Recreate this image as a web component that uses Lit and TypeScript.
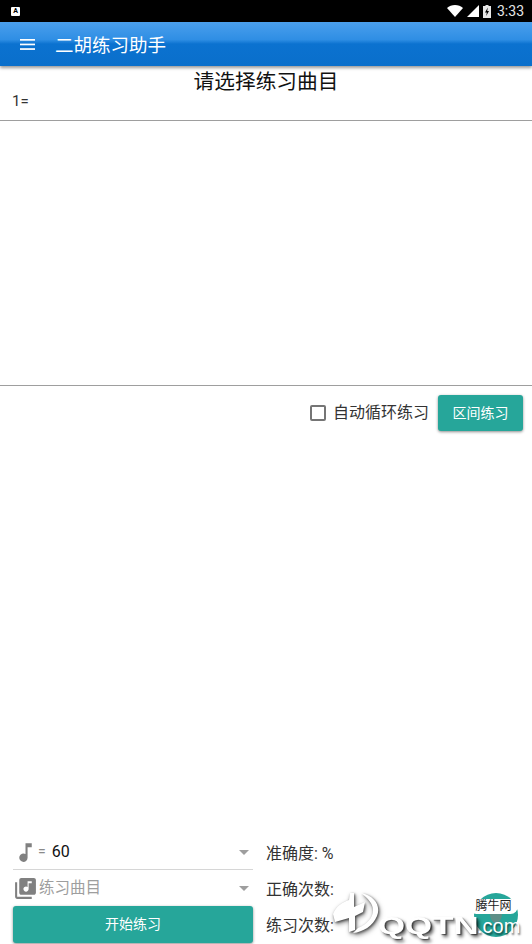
import { LitElement, html, css } from 'lit'
import { customElement } from 'lit/decorators.js'

/**
 * Erhu practice screen
 */
@customElement('app-root')
export class AppRoot extends LitElement {
  static styles = css`
    :host {
      display: flex;
      flex-direction: column;
      position: relative;
      width: 532px;
      height: 944px;
      overflow: hidden;
      background: #fff;
      color: #212121;
      font-family: 'Roboto', 'Noto Sans CJK SC', sans-serif;
    }

    .status {
      height: 22px;
      background: #000;
      display: flex;
      align-items: center;
      padding: 0 0 0 11px;
      color: #e6e6e6;
      font-size: 14px;
      flex: none;
    }
    .status .note {
      width: 9px;
      height: 9px;
      background: #fff;
      border-radius: 1px;
      color: #000;
      font-size: 7px;
      font-weight: 700;
      line-height: 9px;
      text-align: center;
    }
    .status .right {
      margin-left: auto;
      display: flex;
      align-items: center;
      gap: 4px;
      padding-right: 8px;
    }
    .status .time {
      margin-left: 2px;
    }

    .bar {
      height: 44px;
      flex: none;
      display: flex;
      align-items: center;
      gap: 20px;
      padding-left: 20px;
      color: #fff;
      font-size: 18.5px;
      background: linear-gradient(#4a9fec 0%, #2f8ee4 40%, #0b72d0 50%, #0a6fcb 100%);
      box-shadow: 0 2px 3px rgba(0, 0, 0, 0.4);
      position: relative;
    }
    .burger {
      display: block;
    }

    .score {
      height: 54px;
      flex: none;
      border-bottom: 1px solid #9e9e9e;
    }
    .title {
      text-align: center;
      font-size: 20.7px;
      line-height: 32px;
      color: #111;
    }
    .key {
      font-size: 15px;
      line-height: 16px;
      padding-left: 12px;
      margin-top: -5px;
      color: #333;
    }

    .stage {
      height: 264px;
      flex: none;
      border-bottom: 1px solid #9e9e9e;
    }

    .loop {
      flex: none;
      display: flex;
      justify-content: flex-end;
      align-items: center;
      padding: 9px 9px 0 0;
    }
    .check {
      width: 12px;
      height: 12px;
      border: 2px solid #757575;
      border-radius: 2px;
      margin-right: 7px;
    }
    .loop-label {
      font-size: 16px;
      line-height: 20px;
      color: #333;
      margin: 0 9px 0 0;
    }
    .btn {
      background: #26a69a;
      color: #fff;
      border-radius: 3px;
      box-shadow: 0 1px 3px rgba(0, 0, 0, 0.45);
      font-size: 14px;
      display: flex;
      align-items: center;
      justify-content: center;
      box-sizing: border-box;
    }
    .loop .btn {
      width: 85px;
      height: 36px;
      padding-bottom: 2px;
    }

    .bottom {
      margin-top: auto;
      display: grid;
      grid-template-columns: 240px auto;
      column-gap: 13px;
      padding: 0 0 1px 13px;
      height: 109px;
      box-sizing: border-box;
    }
    .controls {
      display: flex;
      flex-direction: column;
    }
    .select {
      display: flex;
      align-items: center;
      box-sizing: border-box;
    }
    .select.first {
      border-bottom: 1px solid #d6d6d6;
      height: 35px;
    }
    .select.second {
      height: 36px;
    }
    .caret {
      margin-left: auto;
      margin-right: 4px;
      width: 0;
      height: 0;
      border-left: 5px solid transparent;
      border-right: 5px solid transparent;
      border-top: 5px solid #9e9e9e;
    }
    .eq {
      color: #8a8a8a;
      font-size: 14px;
      margin: -2px 6px 0 0;
    }
    .tempo {
      font-size: 16px;
      color: #111;
      margin-top: -2px;
    }
    .placeholder {
      color: #9e9e9e;
      font-size: 15.5px;
      margin: -4px 0 0 1px;
    }
    .controls .btn {
      height: 37px;
      padding-bottom: 3px;
    }

    .stats {
      display: flex;
      flex-direction: column;
      font-size: 16px;
      color: #333;
      margin-top: -1px;
    }
    .stats div {
      height: 36px;
      display: flex;
      align-items: center;
    }

    /* watermark and the button below it */
    .fab {
      position: absolute;
      left: 474px;
      top: 893px;
      width: 44px;
      height: 44px;
      border-radius: 50%;
      background: #26a69a;
      display: flex;
      align-items: center;
      justify-content: center;
    }
    .fab svg {
      margin-top: 3px;
    }
    .mark {
      position: absolute;
      left: 378px;
      top: 912px;
      font-family: 'Liberation Sans', sans-serif;
      font-weight: 700;
      font-size: 24px;
      line-height: 28px;
      color: #fff;
      text-shadow: 1px 1px 1px rgba(0, 0, 0, 0.55), 2px 3px 3px rgba(0, 0, 0, 0.6);
      white-space: nowrap;
      transform: scaleX(1.45);
      transform-origin: left center;
    }
    .dot-com {
      position: absolute;
      left: 477px;
      top: 914px;
      font-family: 'Liberation Sans', sans-serif;
      font-size: 20px;
      line-height: 24px;
      color: #fff;
      text-shadow: 1px 2px 2px rgba(0, 0, 0, 0.6);
    }
    .tag {
      position: absolute;
      left: 469px;
      top: 899px;
      width: 49px;
      text-align: center;
      background: #fff;
      border-radius: 8px;
      font-size: 12px;
      line-height: 15px;
      color: #222;
    }
    .logo {
      position: absolute;
      left: 331px;
      top: 892px;
      filter: drop-shadow(1px 1px 1px rgba(0, 0, 0, 0.5)) drop-shadow(1px 2px 2px rgba(0, 0, 0, 0.5));
    }
  `

  render() {
    return html`
      <div class="status">
        <div class="note">A</div>
        <div class="right">
          <svg width="16" height="12" viewBox="0 0 16 12"><path d="M0 3C4-1 12-1 16 3L8 12Z" fill="#fff" /></svg>
          <svg width="12" height="12" viewBox="0 0 12 12"><path d="M12 0V12H0Z" fill="#fff" /></svg>
          <svg width="8" height="13" viewBox="0 0 8 13">
            <path d="M2.5 0H5.5V1H8V13H0V1H2.5Z" fill="#e8e8e8" />
            <path d="M4.8 2.5L2 7.5H3.8L3.2 11L6 6H4.2Z" fill="#000" />
          </svg>
          <span class="time">3:33</span>
        </div>
      </div>
      <div class="bar">
        <svg class="burger" width="15" height="11" viewBox="0 0 15 11" fill="#fff">
          <rect y="0" width="15" height="1.7" />
          <rect y="4.6" width="15" height="1.7" />
          <rect y="9.2" width="15" height="1.7" />
        </svg>
        <span>二胡练习助手</span>
      </div>
      <div class="score">
        <div class="title">请选择练习曲目</div>
        <div class="key">1=</div>
      </div>
      <div class="stage"></div>
      <div class="loop">
        <div class="check"></div>
        <span class="loop-label">自动循环练习</span>
        <div class="btn">区间练习</div>
      </div>
      <div class="bottom">
        <div class="controls">
          <div class="select first">
            <svg width="25" height="25" viewBox="0 0 24 24" fill="#808080"><path d="M12 3v10.55A4 4 0 1 0 14 17V7h4V3z" /></svg>
            <span class="eq">=</span>
            <span class="tempo">60</span>
            <i class="caret"></i>
          </div>
          <div class="select second">
            <svg width="25" height="25" viewBox="0 0 24 24" fill="#808080"><path d="M20 2H8c-1.1 0-2 .9-2 2v12c0 1.1.9 2 2 2h12c1.1 0 2-.9 2-2V4c0-1.1-.9-2-2-2zm-2 5h-3v5.5c0 1.38-1.12 2.5-2.5 2.5S10 13.88 10 12.5s1.12-2.5 2.5-2.5c.57 0 1.08.19 1.5.51V5h4v2zM4 6H2v14c0 1.1.9 2 2 2h14v-2H4V6z" /></svg>
            <span class="placeholder">练习曲目</span>
            <i class="caret"></i>
          </div>
          <div class="btn">开始练习</div>
        </div>
        <div class="stats">
          <div>准确度: %</div>
          <div>正确次数:</div>
          <div>练习次数:</div>
        </div>
      </div>
      <div class="fab">
        <svg width="14" height="16" viewBox="0 0 14 16" fill="#5f8f88"><path d="M1 1C5 0 7 2 7 6C7 2 9 0 13 1C14 8 11 13 7 15C3 13 0 8 1 1Z" /></svg>
      </div>
      <svg class="logo" width="50" height="44" viewBox="0 0 50 44" fill="#fff">
        <path d="M30 1C44 4 50 14 46 24C42 34 32 40 22 41L27 36C36 32 42 26 42 18C42 12 37 6 30 1Z" />
        <path d="M2 22C5 14 12 10 18 8L19 1L23 1L23 15L34 10L32 20L24 24L24 38L18 40L18 26L4 30Z" />
      </svg>
      <div class="mark">QQTN</div>
      <div class="dot-com">.com</div>
      <div class="tag">腾牛网</div>
    `
  }
}

declare global {
  interface HTMLElementTagNameMap {
    'app-root': AppRoot
  }
}
